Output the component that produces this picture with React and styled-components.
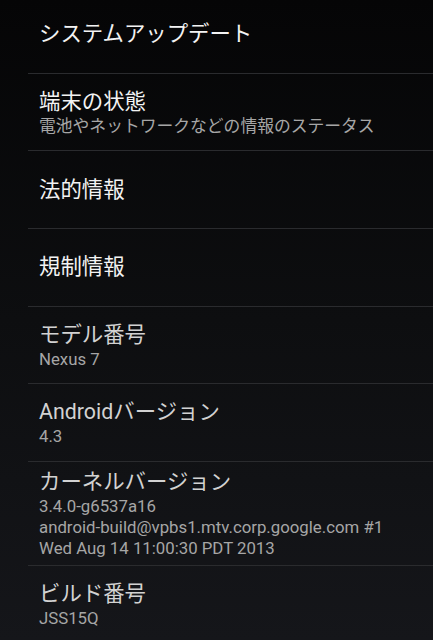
import React from "react";
import styled, { createGlobalStyle } from "styled-components";

const GlobalStyle = createGlobalStyle`
  html, body {
    margin: 0;
    padding: 0;
    background: #0a0a0c;
  }
  body {
    font-family: "Roboto", "Noto Sans CJK JP", sans-serif;
  }
`;

const Screen = styled.div`
  width: 433px;
  height: 640px;
  overflow: hidden;
  background: linear-gradient(180deg, #050506 0%, #0d0e10 50%, #15161a 100%);
`;

const List = styled.div`
  display: flex;
  flex-direction: column;
  margin-top: -4px;
`;

const Row = styled.div`
  display: flex;
  flex-direction: column;
  justify-content: center;
  min-height: 77.7px;
  box-sizing: border-box;
  padding: 6px 0 6px 11px;
  margin-left: 28px;
  border-bottom: 1px solid #2a2b2e;
`;

const Title = styled.div`
  font-size: 21.4px;
  line-height: 28px;
  color: ${(p) => (p.$dim ? "#d2d2d2" : "#f3f3f3")};
  white-space: nowrap;
`;

const Summary = styled.div`
  font-size: 16.8px;
  line-height: 21px;
  color: #a6a6a6;
  white-space: nowrap;
  &:first-of-type {
    margin-top: 2px;
  }
`;

const items = [
  { title: "システムアップデート" },
  { title: "端末の状態", summary: ["電池やネットワークなどの情報のステータス"] },
  { title: "法的情報" },
  { title: "規制情報" },
  { title: "モデル番号", summary: ["Nexus 7"], dim: true },
  { title: "Androidバージョン", summary: ["4.3"], dim: true },
  {
    title: "カーネルバージョン",
    summary: [
      "3.4.0-g6537a16",
      "android-build@vpbs1.mtv.corp.google.com #1",
      "Wed Aug 14 11:00:30 PDT 2013",
    ],
    dim: true,
  },
  { title: "ビルド番号", summary: ["JSS15Q"], dim: true },
];

export default function App() {
  return (
    <>
      <GlobalStyle />
      <Screen>
        <List>
          {items.map((item) => (
            <Row key={item.title}>
              <Title $dim={item.dim}>{item.title}</Title>
              {item.summary &&
                item.summary.map((line) => <Summary key={line}>{line}</Summary>)}
            </Row>
          ))}
        </List>
      </Screen>
    </>
  );
}
